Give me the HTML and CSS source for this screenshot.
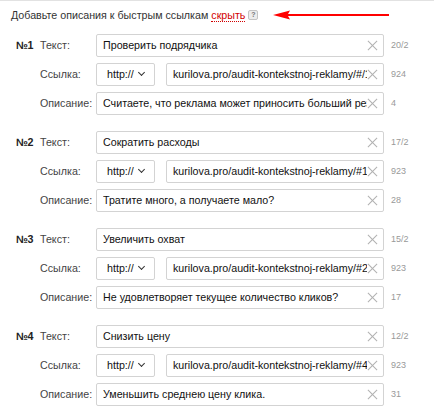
FILE: index.html
```html
<!DOCTYPE html>
<html lang="ru">
<head>
<meta charset="utf-8">
<link rel="stylesheet" href="styles.css">
</head>
<body>
<div class="page">
  <div class="header">
    <span class="title">Добавьте описания к быстрым ссылкам</span>
    <span class="hide">скрыть</span>
    <span class="help">?</span>
    <svg class="arrow" width="116" height="10" viewBox="0 0 116 10"><path d="M0 5 L17 0.5 L15 4 L116 4 L116 6 L15 6 L17 9.5 Z" fill="#f00"/></svg>
  </div>

  <div class="groups">
    <div class="group">
      <div class="row"><span class="num">№1</span><span class="label">Текст:</span><div class="field wide"><span class="val">Проверить подрядчика</span><span class="x"></span></div><span class="count">20/2</span></div>
      <div class="row"><span class="num"></span><span class="label">Ссылка:</span><div class="select">http:// <span class="chev"></span></div><div class="field url"><span class="val">kurilova.pro/audit-kontekstnoj-reklamy/#/1</span><span class="x"></span></div><span class="count">924</span></div>
      <div class="row"><span class="num"></span><span class="label">Описание:</span><div class="field wide"><span class="val">Считаете, что реклама может приносить больший результат?</span><span class="x"></span></div><span class="count">4</span></div>
    </div>

    <div class="group">
      <div class="row"><span class="num">№2</span><span class="label">Текст:</span><div class="field wide"><span class="val">Сократить расходы</span><span class="x"></span></div><span class="count">17/2</span></div>
      <div class="row"><span class="num"></span><span class="label">Ссылка:</span><div class="select">http:// <span class="chev"></span></div><div class="field url"><span class="val">kurilova.pro/audit-kontekstnoj-reklamy/#1</span><span class="x"></span></div><span class="count">923</span></div>
      <div class="row"><span class="num"></span><span class="label">Описание:</span><div class="field wide"><span class="val">Тратите много, а получаете мало?</span><span class="x"></span></div><span class="count">28</span></div>
    </div>

    <div class="group">
      <div class="row"><span class="num">№3</span><span class="label">Текст:</span><div class="field wide"><span class="val">Увеличить охват</span><span class="x"></span></div><span class="count">15/2</span></div>
      <div class="row"><span class="num"></span><span class="label">Ссылка:</span><div class="select">http:// <span class="chev"></span></div><div class="field url"><span class="val">kurilova.pro/audit-kontekstnoj-reklamy/#2</span><span class="x"></span></div><span class="count">923</span></div>
      <div class="row"><span class="num"></span><span class="label">Описание:</span><div class="field wide"><span class="val">Не удовлетворяет текущее количество кликов?</span><span class="x"></span></div><span class="count">17</span></div>
    </div>

    <div class="group">
      <div class="row"><span class="num">№4</span><span class="label">Текст:</span><div class="field wide"><span class="val">Снизить цену</span><span class="x"></span></div><span class="count">12/2</span></div>
      <div class="row"><span class="num"></span><span class="label">Ссылка:</span><div class="select">http:// <span class="chev"></span></div><div class="field url"><span class="val">kurilova.pro/audit-kontekstnoj-reklamy/#4</span><span class="x"></span></div><span class="count">923</span></div>
      <div class="row"><span class="num"></span><span class="label">Описание:</span><div class="field wide"><span class="val">Уменьшить среднею цену клика.</span><span class="x"></span></div><span class="count">31</span></div>
    </div>
  </div>
</div>
</body>
</html>
```

FILE: styles.css
```css
html, body {
  margin: 0;
  padding: 0;
  background: #fff;
}
body {
  font-family: "Liberation Sans", Arial, sans-serif;
  font-size: 10.7px;
  color: #000;
}
.page {
  border-top: 1px solid #e2e2e2;
  height: 419px;
  overflow: hidden;
}
.header {
  display: flex;
  align-items: center;
  height: 16px;
  line-height: 16px;
  margin-top: 6px;
  padding-left: 11px;
  color: #333;
  white-space: nowrap;
}
.hide {
  margin-left: 3px;
  color: #d20000;
  border-bottom: 1px dotted #d20000;
  line-height: 12px;
}
.help {
  margin-left: 3px;
  width: 8px;
  height: 8px;
  border: 1px solid #c4c4c4;
  border-radius: 2px;
  background: #ececec;
  color: #777;
  font-size: 7px;
  line-height: 8px;
  text-align: center;
  font-weight: bold;
}
.arrow {
  margin-left: 15px;
  display: block;
  flex: none;
}
.groups {
  display: flex;
  flex-direction: column;
  gap: 15px;
  margin-top: 10px;
  padding-left: 16px;
}
.group {
  display: flex;
  flex-direction: column;
  gap: 5px;
}
.row {
  display: flex;
  align-items: center;
  height: 24px;
}
.num {
  width: 24px;
  flex: none;
  font-weight: bold;
  color: #222;
  letter-spacing: -0.3px;
}
.label {
  width: 56px;
  flex: none;
  color: #444;
}
.field {
  box-sizing: border-box;
  height: 23px;
  border: 1px solid #d3d3d3;
  border-radius: 2px;
  display: flex;
  align-items: center;
  padding-left: 6px;
  flex: none;
  color: #111;
  overflow: hidden;
}
.field.wide { width: 288px; }
.field.url { width: 218px; }
.val {
  flex: 1;
  white-space: nowrap;
  overflow: hidden;
  min-width: 0;
}
.x {
  flex: none;
  width: 9px;
  height: 9px;
  margin: 0 6px 0 1px;
  position: relative;
}
.x::before, .x::after {
  content: "";
  position: absolute;
  left: -2px;
  top: 4px;
  width: 13px;
  height: 1px;
  background: #b0b0b0;
  transform: rotate(45deg);
}
.x::after { transform: rotate(-45deg); }
.select {
  box-sizing: border-box;
  width: 59px;
  height: 23px;
  flex: none;
  border: 1px solid #d3d3d3;
  border-radius: 2px;
  margin-right: 11px;
  display: flex;
  align-items: center;
  padding-left: 10px;
  color: #111;
}
.chev {
  width: 4px;
  height: 4px;
  border-right: 1.2px solid #333;
  border-bottom: 1.2px solid #333;
  transform: rotate(45deg);
  margin-left: 5px;
  margin-top: -3px;
}
.count {
  margin-left: 7px;
  font-size: 9px;
  color: #999;
}
```
